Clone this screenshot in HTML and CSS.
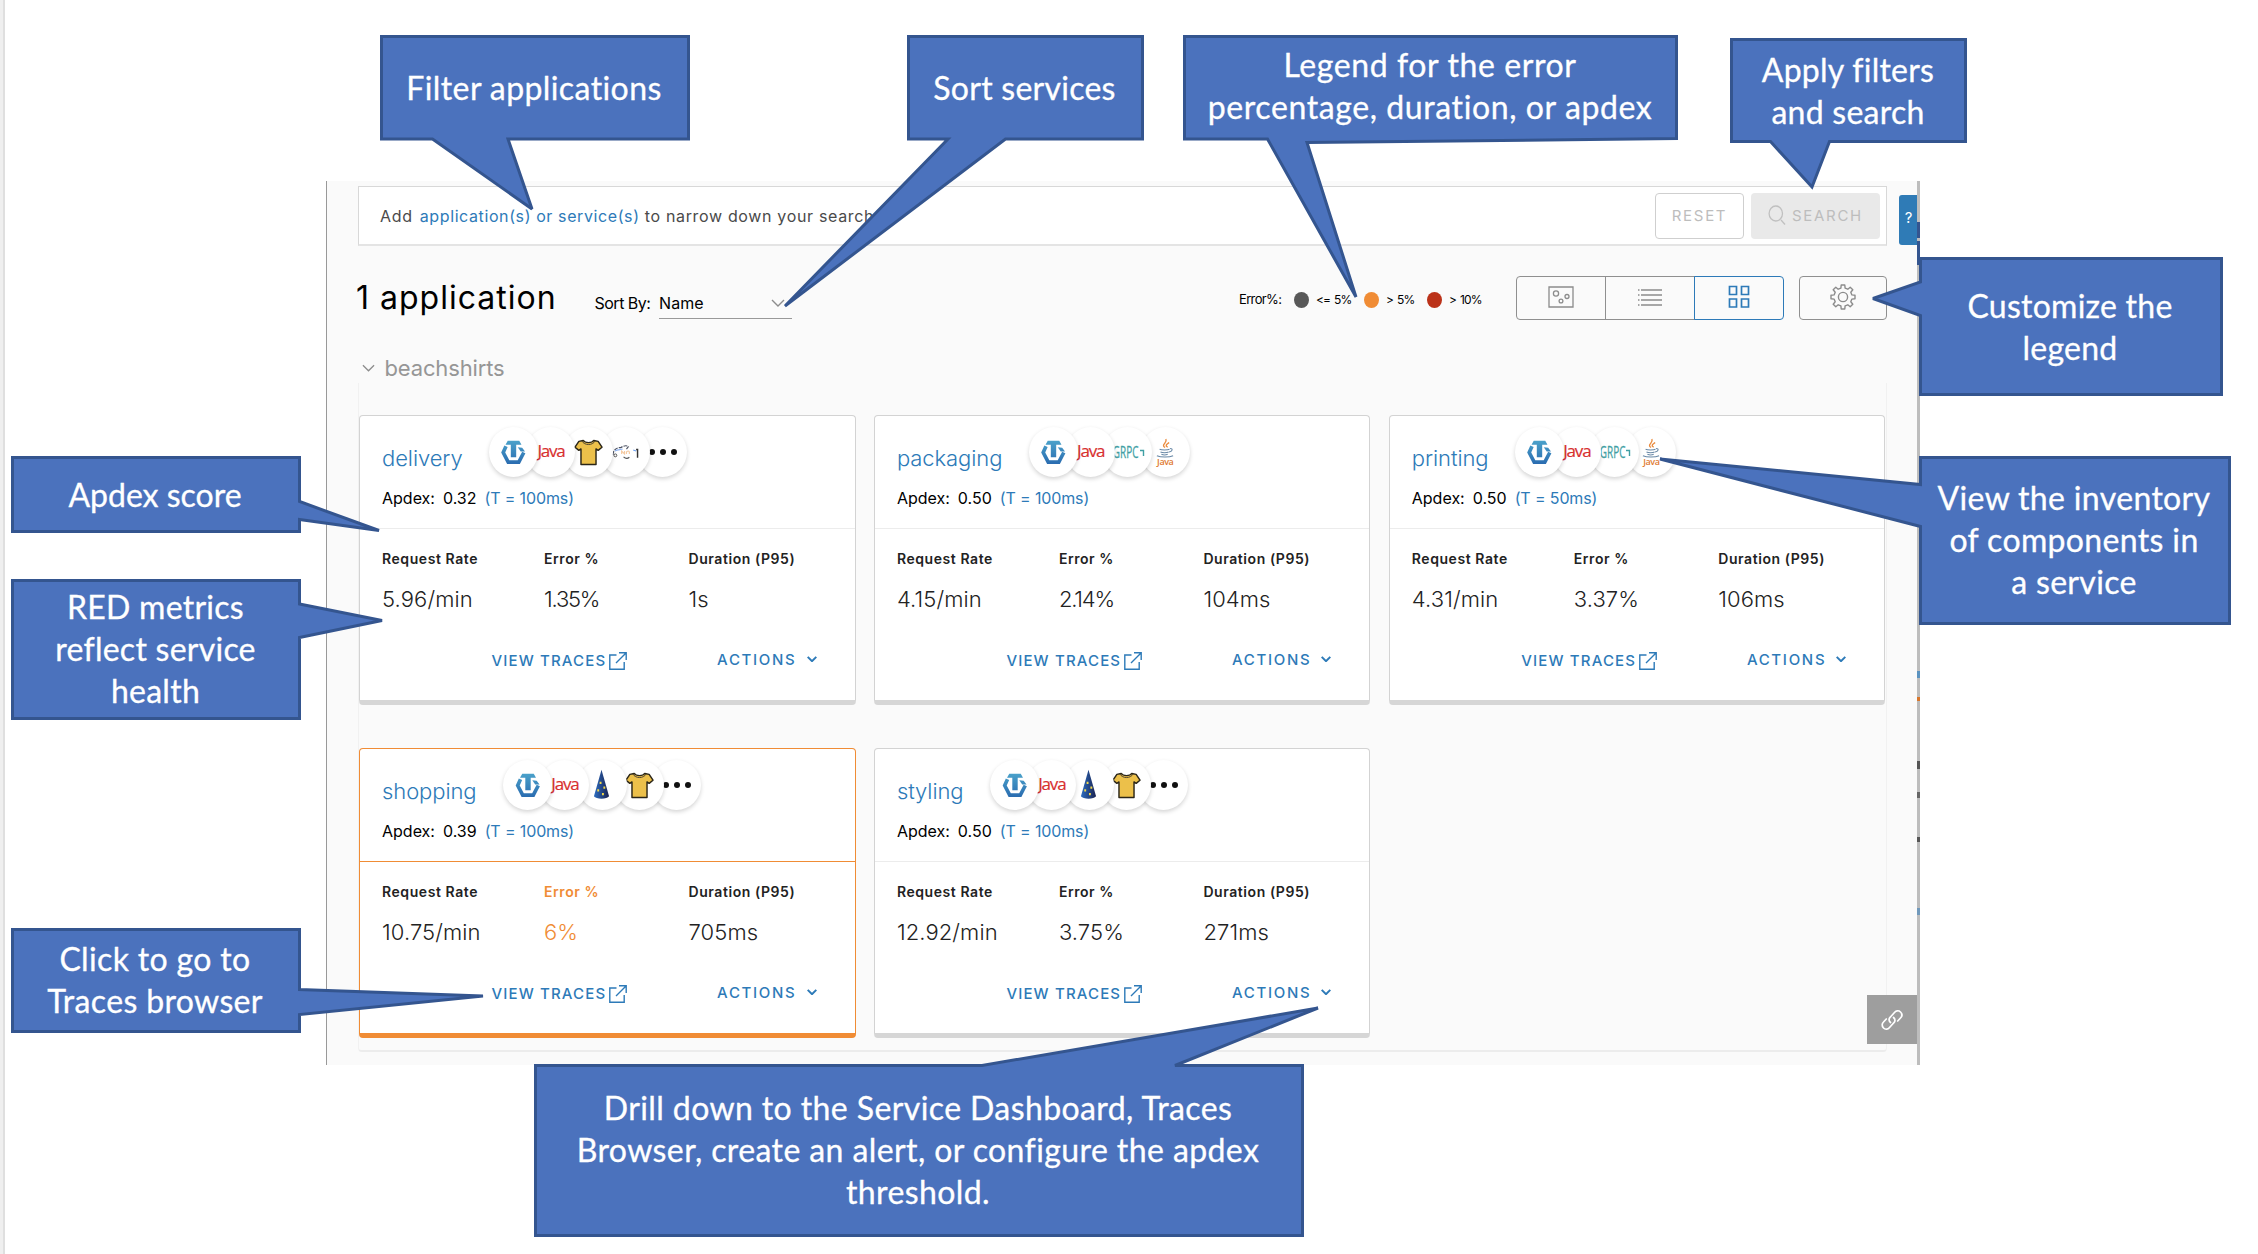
FILE: index.html
```html
<!DOCTYPE html>
<html lang="en">
<head>
<meta charset="utf-8">
<title>Application services</title>
<link rel="stylesheet" href="styles.css">
</head>
<body>
<svg class="defs" width="0" height="0">
  <defs>
    <linearGradient id="teal" gradientUnits="userSpaceOnUse" x1="0" y1="0" x2="0" y2="25"><stop offset="0" stop-color="#4ba3cb"/><stop offset="1" stop-color="#2a6cb0"/></linearGradient>
    <linearGradient id="cone" x1="0" y1="0" x2="1" y2="0"><stop offset="0" stop-color="#2c6cc0"/><stop offset="1" stop-color="#1b2350"/></linearGradient>
    <symbol id="i-tracer" viewBox="0 0 26 26">
      <path d="M7 .8h12l2.300 4.200H15.800V18h-5.600V5H4.700z" fill="url(#teal)"/>
      <path d="M5.200 6.500 2.300 13 7.500 23h11L23.700 13" fill="none" stroke="url(#teal)" stroke-width="3.800"/>
      <path d="m17.500 7.500 4.500.5 3 4h-4.500z" fill="url(#teal)"/>
    </symbol>
    <symbol id="i-shirt" viewBox="0 0 30 28">
      <path d="M9.500 1.500c2 3 9 3 11 0l4.500 1L29 8.500l-4 3.300-2.200-1.500V26.500H7.200V10.300L5 11.800 1 8.500l4-6z" fill="#ecc04a" stroke="#2b2618" stroke-width="1.500" stroke-linejoin="round"/>
      <path d="M8 2c3 5 11 5 14 0" fill="none" stroke="#4a4130" stroke-width="1"/>
    </symbol>
    <symbol id="i-cone" viewBox="0 0 18 32">
      <path d="M9 .500 1 28.500c2 3.500 14 3.500 16 0z" fill="url(#cone)"/>
      <path d="M7 13h2v2.500H7zM11 18h2v2.500h-2zM4.500 21h2v2.500h-2zM9.500 25h2v2.500h-2z" fill="#f0d84a"/>
    </symbol>
    <symbol id="i-fish" viewBox="0 0 28 16">
      <path d="M1 11c0-5 4-8 8-7.500 4-2.500 6-2.500 8-1l-2 2.500" fill="none" stroke="#4c5262" stroke-width="1.200" stroke-dasharray="4 1.200"/>
      <path d="M3 7c3-2 6-1 8-2" fill="none" stroke="#8fb2f0" stroke-width="1.200"/>
      <circle cx="3.500" cy="11.500" r="1.500" fill="none" stroke="#333" stroke-width=".8"/>
      <path d="M10 10V7l3 3V7M15 10V8q2-2 3 0v2" fill="none" stroke="#f5c9a0" stroke-width="1.200"/>
      <path d="M12 13q3 3 6 .500" fill="none" stroke="#555" stroke-width="1.200"/>
      <path d="m22 6 3 1" stroke="#6da0f0" stroke-width="1.200"/>
      <path d="M25 5.500h1.500V14" fill="none" stroke="#333" stroke-width="1.500"/>
    </symbol>
    <symbol id="i-cup" viewBox="0 0 20 21">
      <path d="M10 10c-5-3.500 3-5 1-9.500M13 9.500c-4-2 0-3.500 1.500-5" fill="none" stroke="#ea8a3c" stroke-width="1.500"/>
      <path d="M4 12c2 1 9 1 11 0M5 15c2 1 7 1 9 0M6 17.500c2 .8 5 .8 7 0M1 19c4 2 14 2 18 0M15.500 11c4 0 2.500 3.500-1 4" fill="none" stroke="#6888a6" stroke-width="1.200"/>
    </symbol>
    <symbol id="i-out" viewBox="0 0 18 18"><path d="M7.500 3H.8v14.200h14.400V10M10 .8h7.200V8M17 1 7 11" fill="none" stroke="currentColor" stroke-width="1.400"/></symbol>
    <symbol id="i-down" viewBox="0 0 14 8"><path d="m1 1 6 6 6-6" fill="none" stroke="currentColor" stroke-width="var(--sw)"/></symbol>
  </defs>
</svg>

<main class="panel">
  <div class="filter">
    <p class="filter-text">Add <a>application(s) or service(s)</a> to narrow down your search</p>
    <span class="btn reset">RESET</span>
    <span class="btn search">
      <svg width="18" height="21" viewBox="0 0 18 21" fill="none" stroke="#c0c0c0" stroke-width="1.300"><ellipse cx="7.800" cy="8.500" rx="6.700" ry="7.500"/><path d="m13 15 4 4.500"/></svg>SEARCH</span>
  </div>

  <div class="toolbar">
    <h1>1 application</h1>
    <span class="sort-label">Sort By:</span>
    <span class="select">Name<svg class="thin" width="14" height="8"><use href="#i-down"/></svg></span>
    <div class="legend">
      <span class="lg-name">Error%:</span>
      <i class="dot grey"></i><span class="lg a">&lt;= 5%</span>
      <i class="dot orange"></i><span class="lg b">&gt; 5%</span>
      <i class="dot red"></i><span class="lg c">&gt; 10%</span>
    </div>
    <div class="views">
      <span class="view"><svg width="26" height="22" viewBox="0 0 26 22" fill="none" stroke="#8c8c8c" stroke-width="1.300"><path d="M1 1h24v20H1z"/><circle cx="8" cy="7.500" r="2.600"/><circle cx="19" cy="10.500" r="2"/><circle cx="13" cy="15" r="1.900"/></svg></span>
      <span class="view"><svg width="24" height="17" viewBox="0 0 24 17" stroke="#8c8c8c" stroke-width="1.300"><path d="M0 1h1.500M3 1h21M0 6h1.500M3 6h21M0 11h1.500M3 11h21M0 16h1.500M3 16h21"/></svg></span>
      <span class="view on"><svg width="22" height="24" viewBox="0 0 22 24" fill="none" stroke="#2d7ab8" stroke-width="1.700"><path d="M1.500 1.500h7v8h-7zM13.500 1.500h7v8h-7zM1.500 14h7v8h-7zM13.500 14h7v8h-7z"/></svg></span>
    </div>
    <span class="view gear"><svg width="26" height="26" viewBox="0 0 26 26" fill="none" stroke="#8c8c8c" stroke-width="1.400" stroke-linejoin="round"><path d="M10.900 4.100 11.200 1h3.600l.3 3.100 2.700 1.100 2.400-2 2.600 2.600-2 2.400 1.100 2.700 3.100.3v3.600l-3.100.3-1.100 2.700 2 2.400-2.600 2.600-2.400-2-2.700 1.100-.3 3.100h-3.600l-.3-3.100-2.700-1.100-2.400 2-2.600-2.600 2-2.400-1.100-2.700L1 14.800v-3.600l3.100-.3 1.100-2.700-2-2.400 2.600-2.600 2.400 2z"/><circle cx="13" cy="13" r="4.600"/></svg></span>
  </div>

  <section class="group">
    <h2><svg class="thin" width="13" height="8"><use href="#i-down"/></svg>beachshirts</h2>
    <div class="cards">

      <article class="card">
        <header>
          <div class="top"><a class="name">delivery</a>
            <div class="chips"><i><svg width="25" height="25"><use href="#i-tracer"/></svg></i><i class="java">Java</i><i><svg width="29" height="27"><use href="#i-shirt"/></svg></i><i><svg width="27" height="16"><use href="#i-fish"/></svg></i><i class="more"><b></b><b></b><b></b></i></div></div>
          <p class="apdex">Apdex:<span>0.32</span><a>(T = 100ms)</a></p>
        </header>
        <div class="metrics"><b>Request Rate</b><b>Error %</b><b>Duration (P95)</b><span>5.96/min</span><span class="tight">1.35%</span><span>1s</span></div>
        <footer><a class="traces">VIEW TRACES<svg width="18" height="18"><use href="#i-out"/></svg></a><a class="actions">ACTIONS<svg width="10" height="6"><use href="#i-down"/></svg></a></footer>
      </article>

      <article class="card">
        <header>
          <div class="top"><a class="name">packaging</a>
            <div class="chips"><i><svg width="25" height="25"><use href="#i-tracer"/></svg></i><i class="java">Java</i><i class="grpc"><span>GRPC</span><svg width="5" height="8" viewBox="0 0 5 8"><path d="M0 1.500h3.500V7" fill="none" stroke="currentColor" stroke-width="1.400"/></svg></i><i class="cup"><svg width="18" height="20"><use href="#i-cup"/></svg><em>Java</em></i></div></div>
          <p class="apdex">Apdex:<span>0.50</span><a>(T = 100ms)</a></p>
        </header>
        <div class="metrics"><b>Request Rate</b><b>Error %</b><b>Duration (P95)</b><span>4.15/min</span><span class="tight">2.14%</span><span>104ms</span></div>
        <footer><a class="traces">VIEW TRACES<svg width="18" height="18"><use href="#i-out"/></svg></a><a class="actions">ACTIONS<svg width="10" height="6"><use href="#i-down"/></svg></a></footer>
      </article>

      <article class="card">
        <header>
          <div class="top"><a class="name">printing</a>
            <div class="chips"><i><svg width="25" height="25"><use href="#i-tracer"/></svg></i><i class="java">Java</i><i class="grpc"><span>GRPC</span><svg width="5" height="8" viewBox="0 0 5 8"><path d="M0 1.500h3.500V7" fill="none" stroke="currentColor" stroke-width="1.400"/></svg></i><i class="cup"><svg width="18" height="20"><use href="#i-cup"/></svg><em>Java</em></i></div></div>
          <p class="apdex">Apdex:<span>0.50</span><a>(T = 50ms)</a></p>
        </header>
        <div class="metrics"><b>Request Rate</b><b>Error %</b><b>Duration (P95)</b><span>4.31/min</span><span>3.37%</span><span>106ms</span></div>
        <footer><a class="traces">VIEW TRACES<svg width="18" height="18"><use href="#i-out"/></svg></a><a class="actions">ACTIONS<svg width="10" height="6"><use href="#i-down"/></svg></a></footer>
      </article>

      <article class="card warn">
        <header>
          <div class="top"><a class="name">shopping</a>
            <div class="chips"><i><svg width="26" height="25"><use href="#i-tracer"/></svg></i><i class="java">Java</i><i><svg class="hat" width="17" height="31"><use href="#i-cone"/></svg></i><i><svg width="29" height="27"><use href="#i-shirt"/></svg></i><i class="more"><b></b><b></b><b></b></i></div></div>
          <p class="apdex">Apdex:<span>0.39</span><a>(T = 100ms)</a></p>
        </header>
        <div class="metrics"><b>Request Rate</b><b class="hot">Error %</b><b>Duration (P95)</b><span>10.75/min</span><span class="hot">6%</span><span>705ms</span></div>
        <footer><a class="traces">VIEW TRACES<svg width="18" height="18"><use href="#i-out"/></svg></a><a class="actions">ACTIONS<svg width="10" height="6"><use href="#i-down"/></svg></a></footer>
      </article>

      <article class="card">
        <header>
          <div class="top"><a class="name">styling</a>
            <div class="chips"><i><svg width="26" height="25"><use href="#i-tracer"/></svg></i><i class="java">Java</i><i><svg class="hat" width="17" height="31"><use href="#i-cone"/></svg></i><i><svg width="29" height="27"><use href="#i-shirt"/></svg></i><i class="more"><b></b><b></b><b></b></i></div></div>
          <p class="apdex">Apdex:<span>0.50</span><a>(T = 100ms)</a></p>
        </header>
        <div class="metrics"><b>Request Rate</b><b>Error %</b><b>Duration (P95)</b><span>12.92/min</span><span>3.75%</span><span>271ms</span></div>
        <footer><a class="traces">VIEW TRACES<svg width="18" height="18"><use href="#i-out"/></svg></a><a class="actions">ACTIONS<svg width="10" height="6"><use href="#i-down"/></svg></a></footer>
      </article>
    </div>
  </section>

  <span class="help">?</span>
  <span class="link"><svg width="22" height="22" viewBox="0 0 22 22" fill="none" stroke="#fff" stroke-width="1.700" stroke-linecap="round"><path d="M9.500 13.500c-2-1.800-1.800-3.800-.3-5.300l4.500-5C15 1.700 17.500 1 19.500 3s1.500 4.500 0 6l-2.800 3"/><path d="M12.500 8.500c2 1.800 1.800 3.800.3 5.300l-4.500 5C7 20.300 4.500 21 2.500 19s-1.500-4.500 0-6l2.800-3"/></svg></span>
  <span class="edge"></span>
</main>

<!-- Annotation balloons over the dashboard -->
<svg class="balloons" width="2258" height="1254" viewBox="0 0 2258 1254">
  <path d="M381.500 36.500H688.500V139H508L532 209 432.500 139H381.500z"/>
  <path d="M908.500 36.500H1142.500V139H1005.500L785 306 948 139H908.500z"/>
  <path d="M1184.500 36.500H1676.500V138.500L1307 142.500 1356 297 1267.500 139H1184.500z"/>
  <path d="M1731.500 39.500H1965.500V141.500H1829.500L1812 187 1770.500 141.500H1731.500z"/>
  <path d="M1920.500 258.500H2221.500V394.500H1920.500V315.500L1873 298.500 1920.500 282z"/>
  <path d="M1920.500 457.500H2229.500V623.500H1920.500V526.500L1660 459 1920.500 484.500z"/>
  <path d="M12.500 457.500H299.500V501.500L379 530.500 299.500 519.500V531.500H12.500z"/>
  <path d="M12.500 580.500H299.500V604L382 620.500 299.500 637.500V718.500H12.500z"/>
  <path d="M12.500 929.500H299.500V989.500L483 996 299.500 1014.500V1031.500H12.500z"/>
  <path d="M535.500 1065.500H982L1318 1008 1175 1065.500H1302.500V1235.500H535.500z"/>
</svg>
<div class="note n1">Filter applications</div>
<div class="note n2">Sort services</div>
<div class="note n3">Legend for the error<br>percentage, duration, or apdex</div>
<div class="note n4">Apply filters<br>and search</div>
<div class="note n5">Customize the<br>legend</div>
<div class="note n6">View the inventory<br>of components in<br>a service</div>
<div class="note n7">Apdex score</div>
<div class="note n8">RED metrics<br>reflect service<br>health</div>
<div class="note n9">Click to go to<br>Traces browser</div>
<div class="note n10">Drill down to the Service Dashboard, Traces<br>Browser, create an alert, or configure the apdex<br>threshold.</div>
</body>
</html>
```

FILE: styles.css
```css
* { box-sizing: border-box; }
body {
  margin: 0;
  width: 2258px;
  height: 1254px;
  overflow: hidden;
  position: relative;
  padding: 181px 0 0 326px;
  background: linear-gradient(90deg, #efefef 3px, #dfdfdf 3px, #dfdfdf 5px, #fff 5px);
  font-family: Inter, "Liberation Sans", sans-serif;
  color: #111;
}
h1, h2, p { margin: 0; font-weight: 400; }
i, em { font-style: normal; }
a { color: #2d7ab8; }
svg { display: block; flex: none; overflow: visible; }
.defs { position: absolute; }

.panel {
  position: relative;
  width: 1594px;
  height: 884px;
  padding: 5px 33px 0 31px;
  background: #fafafa;
  border-left: 1px solid #999;
  border-right: 3px solid #bdbdbd;
}

/* filter bar */
.filter {
  display: flex;
  align-items: center;
  width: 1529px;
  height: 60px;
  padding: 0 6px 0 21px;
  background: #fff;
  border: 1px solid #d8d8d8;
  border-bottom: 2px solid #e4e4e4;
}
.filter-text { flex: 1; font-size: 16px; letter-spacing: .66px; color: #4a4a4a; }
.filter-text a { margin-left: 2px; letter-spacing: .6px; }
.btn {
  display: flex;
  align-items: center;
  justify-content: center;
  height: 46px;
  border-radius: 4px;
  font-size: 15px;
  letter-spacing: 1.700px;
  color: #bdbdbd;
}
.reset { width: 89px; margin-right: 7px; border: 1px solid #cfcfcf; }
.search { width: 129px; gap: 6px; background: #e9e9e9; }

/* toolbar */
.toolbar { display: flex; align-items: center; width: 1529px; height: 44px; margin-top: 30px; }
h1 { width: 236.500px; margin-top: -1px; text-indent: -2px; font-size: 32px; letter-spacing: 1px; line-height: 40px; color: #000; white-space: nowrap; }
.sort-label { width: 64.500px; padding-top: 10px; font-size: 16px; letter-spacing: -.5px; white-space: nowrap; color: #000; }
.select {
  display: flex;
  align-items: center;
  justify-content: space-between;
  width: 133px;
  height: 30px;
  margin-top: 11px;
  padding: 0 7px 0 0;
  border-bottom: 1px solid #999;
  font-size: 16px;
  letter-spacing: .1px;
  color: #000;
}
.thin { --sw: 1.400px; color: #8c8c8c; }
.legend { display: flex; align-items: center; margin-left: 447px; padding-top: 3px; font-size: 12px; letter-spacing: -.9px; word-spacing: 1.500px; width: 277px; white-space: nowrap; color: #000; }
.lg-name { width: 55px; font-size: 13px; letter-spacing: -.65px; margin-top: -1px; }
.dot { width: 15px; height: 16px; margin-right: 1px; border-radius: 50%; }
.grey { background: #585858; }
.orange { background: #f08c35; }
.red { background: #bb3219; }
.lg { padding-left: 6px; margin-top: -1px; }
.a { width: 54px; }
.b { width: 47px; }
.views { display: flex; width: 268px; height: 44px; }
.view { display: flex; flex: 1; align-items: center; justify-content: center; height: 44px; padding-bottom: 2px; border: 1px solid #8f8f8f; }
.view + .view { border-left-width: 1px; margin-left: -1px; }
.view:first-child { border-radius: 4px 0 0 4px; }
.view.on { border: 1.500px solid #2d7ab8; border-radius: 0 4px 4px 0; }
.view.gear { flex: none; width: 88px; margin-left: 15px; border-radius: 4px; }

/* service group */
.group { display: flow-root; width: 1529px; height: 669px; margin-top: 63px; border: 1px solid #f1f1f1; border-top: 0; border-bottom: 2px solid #ececec; border-radius: 0 0 4px 4px; }
h2 { display: flex; align-items: center; gap: 10px; margin: -29px 0 33px 2.500px; font-size: 22px; line-height: 28px; letter-spacing: -.15px; color: #969696; }
.cards { display: grid; grid-template-columns: repeat(3, 496.500px); column-gap: 18.400px; row-gap: 43px; }
.card { height: 290px; background: #fff; border: 1px solid #d3d3d3; border-bottom: 5px solid #d6d6d6; border-radius: 4px; }
.card header { height: 113px; padding: 11px 0 0 22px; border-bottom: 1px solid #ececec; }
.top { display: flex; align-items: center; height: 50px; }
.name { padding-top: 11px; font-size: 22px; font-weight: 350; line-height: 28px; letter-spacing: -.08px; margin-right: 26.500px; }
.chips { display: flex; }
.chips i {
  display: flex;
  align-items: center;
  justify-content: center;
  position: relative;
  width: 49px;
  height: 50px;
  margin-right: -11.700px;
  border-radius: 50%;
  background: #fff;
  box-shadow: 0 2px 4px rgba(0, 0, 0, .17);
}
.chips i:nth-child(1) { z-index: 5; }
.chips i:nth-child(2) { z-index: 4; }
.chips i:nth-child(3) { z-index: 3; }
.chips i:nth-child(4) { z-index: 2; }
.chips .java { padding-bottom: 3px; font: 17px "Open Sans", sans-serif; letter-spacing: -1.200px; color: #d8302f; -webkit-text-stroke: .2px #d8302f; }
.chips .grpc { color: #3f9fa4; font: 16px "Open Sans", sans-serif; }
.grpc span { transform: scaleX(.62); margin: 0 -7px 0 -6px; -webkit-text-stroke: .3px #3f9fa4; }
.grpc svg { margin-top: 2px; }
.chips .cup { flex-direction: column; }
.cup em { margin-top: -1px; font: 600 9px/9px "Open Sans", sans-serif; letter-spacing: -.4px; color: #e07a30; }
.hat { margin: -2px 2px 0 0; }
.chips .more { gap: 5px; }
.more b { width: 6px; height: 6px; border-radius: 50%; background: #111; }
.apdex { margin-top: 11px; font-size: 16px; line-height: 20px; letter-spacing: 0; color: #000; }
.apdex span { margin: 0 8px; letter-spacing: 0; }
.apdex a { letter-spacing: -.12px; }
.metrics { display: grid; grid-template-columns: 162px 144.500px 1fr; row-gap: 16px; padding: 20px 0 0 22px; }
.metrics b { font-size: 14px; font-weight: 600; line-height: 20px; letter-spacing: .57px; color: #222; }
.metrics span { font-size: 22px; font-weight: 300; line-height: 28px; letter-spacing: .1px; color: #222; }
.metrics .tight { letter-spacing: -1.200px; }
.metrics .hot { color: #f08c35; }
footer { display: flex; justify-content: space-between; align-items: center; margin: 34px 38px 0 131.500px; height: 24px; font-size: 15px; font-weight: 500; }
footer a { display: flex; align-items: center; }
.traces { gap: 2.500px; letter-spacing: 1.150px; padding-top: 3px; }
.actions { gap: 10px; letter-spacing: 1.700px; --sw: 2.800px; }
.warn { border-color: #f08c35; }
.warn header { border-bottom-color: #f08c35; }

/* controls pinned to the panel's edge */
.help { position: absolute; right: 0; top: 14px; width: 18px; height: 50px; padding-left: 1px; border-radius: 3px 0 0 3px; background: #2f7bb6; color: #fff; font-size: 15px; line-height: 45px; text-align: center; }
.link { position: absolute; right: 0; top: 814px; width: 50px; height: 49px; display: flex; align-items: center; justify-content: center; background: #9e9e9e; }
/* sliver of the page that scrolls behind the panel */
.edge {
  position: absolute;
  right: -3px;
  top: 0;
  width: 3px;
  height: 884px;
  background: linear-gradient(transparent 41px, #34558f 41px 57px, transparent 57px 60px, #34558f 60px 84px, transparent 84px 490px, #5b93c0 490px 497px, transparent 497px 516px, #d9772b 516px 520px, transparent 520px 580px, #555 580px 588px, transparent 588px 611px, #666 611px 617px, transparent 617px 656px, #555 656px 661px, transparent 661px 727px, #7199bb 727px 734px, transparent 734px);
}

/* annotation balloons */
.balloons { position: absolute; left: 0; top: 0; z-index: 10; fill: #4b72bd; stroke: #34558f; stroke-width: 3px; stroke-linejoin: miter; stroke-miterlimit: 3; }
.note {
  position: absolute;
  z-index: 11;
  display: flex;
  flex-direction: column;
  justify-content: center;
  text-align: center;
  font: 32px/42px Lato, "Liberation Sans", sans-serif;
  letter-spacing: .25px;
  color: #fff;
  white-space: nowrap;
  -webkit-text-stroke: .3px #fff;
}
.n1 { left: 380px; top: 35px; width: 308px; height: 106px; letter-spacing: .4px; }
.n2 { left: 907px; top: 35px; width: 235px; height: 106px; }
.n3 { left: 1183px; top: 33px; width: 494px; height: 106px; letter-spacing: .6px; }
.n4 { left: 1730px; top: 38px; width: 236px; height: 105px; }
.n5 { left: 1919px; top: 257px; width: 302px; height: 139px; }
.n6 { left: 1919px; top: 455px; width: 310px; height: 169px; letter-spacing: .35px; }
.n7 { left: 11px; top: 456px; width: 288px; height: 77px; letter-spacing: 0; }
.n8 { left: 11px; top: 578px; width: 289px; height: 141px; }
.n9 { left: 11px; top: 927px; width: 288px; height: 105px; letter-spacing: .35px; }
.n10 { left: 534px; top: 1063px; width: 768px; height: 173px; letter-spacing: .4px; }
```
